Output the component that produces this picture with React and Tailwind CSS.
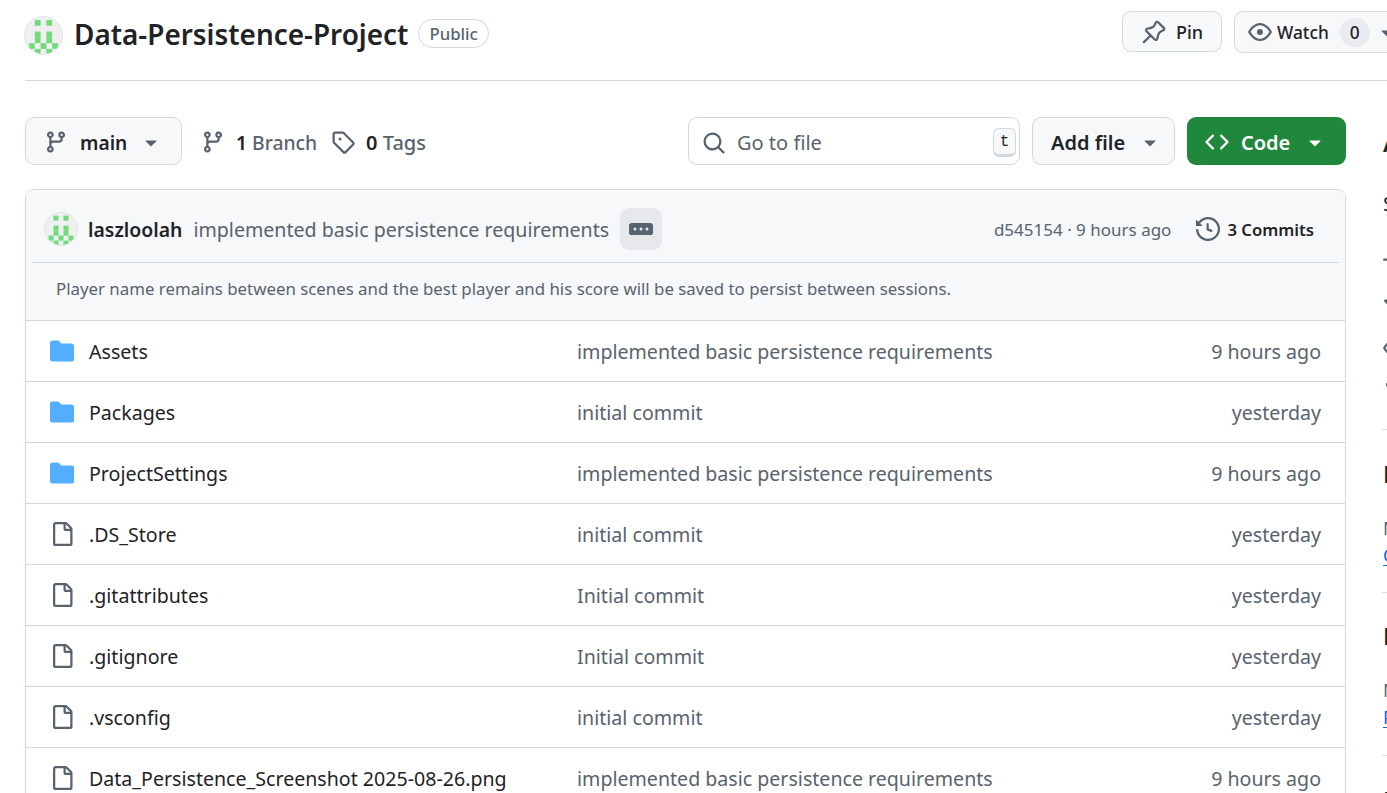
import React from 'react';

const ICONS = {
  branch: 'M9.5 3.25a2.25 2.25 0 1 1 3 2.122V6A2.5 2.5 0 0 1 10 8.5H6a1 1 0 0 0-1 1v1.128a2.251 2.251 0 1 1-1.5 0V5.372a2.25 2.25 0 1 1 1.5 0v1.836A2.493 2.493 0 0 1 6 7h4a1 1 0 0 0 1-1v-.628A2.25 2.25 0 0 1 9.5 3.25Zm-6 0a.75.75 0 1 0 1.5 0 .75.75 0 0 0-1.5 0Zm8.25-.75a.75.75 0 1 0 0 1.5.75.75 0 0 0 0-1.5ZM4.25 12a.75.75 0 1 0 0 1.5.75.75 0 0 0 0-1.5Z',
  tag: 'M1 7.775V2.75C1 1.784 1.784 1 2.75 1h5.025c.464 0 .91.184 1.238.513l6.25 6.25a1.75 1.75 0 0 1 0 2.474l-5.026 5.026a1.75 1.75 0 0 1-2.474 0l-6.25-6.25A1.752 1.752 0 0 1 1 7.775Zm1.5 0c0 .066.026.13.073.177l6.25 6.25a.25.25 0 0 0 .354 0l5.025-5.025a.25.25 0 0 0 0-.354l-6.25-6.25a.25.25 0 0 0-.177-.073H2.75a.25.25 0 0 0-.25.25ZM6 5a1 1 0 1 1 0 2 1 1 0 0 1 0-2Z',
  pin: 'm11.294.984 3.722 3.722a1.75 1.75 0 0 1-.504 2.826l-1.327.613a3.089 3.089 0 0 0-1.707 2.084l-.584 2.454c-.317 1.332-1.972 1.8-2.94.832L5.75 11.311 1.78 15.28a.749.749 0 1 1-1.06-1.06l3.969-3.97-2.204-2.204c-.968-.968-.5-2.623.832-2.94l2.454-.584a3.08 3.08 0 0 0 2.084-1.707l.613-1.327a1.75 1.75 0 0 1 2.826-.504ZM6.283 9.723l2.731 2.731a.25.25 0 0 0 .42-.119l.584-2.454a4.586 4.586 0 0 1 2.537-3.098l1.328-.613a.25.25 0 0 0 .072-.404l-3.722-3.722a.25.25 0 0 0-.404.072l-.613 1.328a4.584 4.584 0 0 1-3.098 2.537l-2.454.584a.25.25 0 0 0-.119.42l2.731 2.731Z',
  eye: 'M8 2c1.981 0 3.671.992 4.933 2.078 1.27 1.091 2.187 2.345 2.637 3.023a1.62 1.62 0 0 1 0 1.798c-.45.678-1.367 1.932-2.637 3.023C11.67 13.008 9.981 14 8 14c-1.981 0-3.671-.992-4.933-2.078C1.797 10.83.88 9.576.43 8.898a1.62 1.62 0 0 1 0-1.798c.45-.677 1.367-1.931 2.637-3.022C4.33 2.992 6.019 2 8 2ZM1.679 7.932a.12.12 0 0 0 0 .136c.411.622 1.241 1.75 2.366 2.717C5.176 11.758 6.527 12.5 8 12.5c1.473 0 2.825-.742 3.955-1.715 1.124-.967 1.954-2.096 2.366-2.717a.12.12 0 0 0 0-.136c-.412-.621-1.242-1.75-2.366-2.717C10.824 4.242 9.473 3.5 8 3.5c-1.473 0-2.825.742-3.955 1.715-1.124.967-1.954 2.096-2.366 2.717ZM8 10a2 2 0 1 1-.001-3.999A2 2 0 0 1 8 10Z',
  search: 'M10.68 11.74a6 6 0 0 1-7.922-8.982 6 6 0 0 1 8.982 7.922l3.04 3.04a.749.749 0 0 1-.326 1.275.749.749 0 0 1-.734-.215ZM11.5 7a4.499 4.499 0 1 0-8.997 0A4.499 4.499 0 0 0 11.5 7Z',
  code: 'm11.28 3.22 4.25 4.25a.75.75 0 0 1 0 1.06l-4.25 4.25a.749.749 0 0 1-1.275-.326.749.749 0 0 1 .215-.734L13.94 8l-3.72-3.72a.749.749 0 0 1 .326-1.275.749.749 0 0 1 .734.215Zm-6.56 0a.751.751 0 0 1 1.042.018.751.751 0 0 1 .018 1.042L2.06 8l3.72 3.72a.749.749 0 0 1-.326 1.275.749.749 0 0 1-.734-.215L.47 8.53a.75.75 0 0 1 0-1.06Z',
  history: 'm.427 1.927 1.215 1.215a8.002 8.002 0 1 1-1.6 5.685.75.75 0 1 1 1.493-.154 6.5 6.5 0 1 0 1.18-4.458l1.358 1.358A.25.25 0 0 1 3.896 6H.25A.25.25 0 0 1 0 5.75V2.104a.25.25 0 0 1 .427-.177ZM7.75 4a.75.75 0 0 1 .75.75v2.992l2.028.812a.75.75 0 0 1-.557 1.392l-2.5-1A.751.751 0 0 1 7 8.25v-3.5A.75.75 0 0 1 7.75 4Z',
  ellipsis: 'M0 5.75C0 4.784.784 4 1.75 4h12.5c.966 0 1.75.784 1.75 1.75v4.5A1.75 1.75 0 0 1 14.25 12H1.75A1.75 1.75 0 0 1 0 10.25ZM12 7a1 1 0 1 0 0 2 1 1 0 0 0 0-2ZM7 8a1 1 0 1 0 2 0 1 1 0 0 0-2 0ZM4 7a1 1 0 1 0 0 2 1 1 0 0 0 0-2Z',
  caret: 'm4.427 7.427 3.396 3.396a.25.25 0 0 0 .354 0l3.396-3.396A.25.25 0 0 0 11.396 7H4.604a.25.25 0 0 0-.177.427Z',
  file: 'M2 1.75C2 .784 2.784 0 3.75 0h6.586c.464 0 .909.184 1.237.513l2.914 2.914c.329.328.513.773.513 1.237v9.586A1.75 1.75 0 0 1 13.25 16h-9.5A1.75 1.75 0 0 1 2 14.25Zm1.75-.25a.25.25 0 0 0-.25.25v12.5c0 .138.112.25.25.25h9.5a.25.25 0 0 0 .25-.25V6h-2.75A1.75 1.75 0 0 1 9 4.25V1.5Zm6.75.062V4.25c0 .138.112.25.25.25h2.688l-.011-.013-2.914-2.914-.013-.011Z',
  folder: 'M1.75 1A1.75 1.75 0 0 0 0 2.75v10.5C0 14.216.784 15 1.75 15h12.5A1.75 1.75 0 0 0 16 13.25v-8.5A1.75 1.75 0 0 0 14.25 3H7.5a.25.25 0 0 1-.2-.1l-.9-1.2C6.07 1.26 5.55 1 5 1H1.75Z',
  pulse: 'M6 2c.306 0 .582.187.696.471L10 10.731l1.304-3.26A.751.751 0 0 1 12 7h3.25a.75.75 0 0 1 0 1.5h-2.742l-1.812 4.528a.751.751 0 0 1-1.392 0L6 4.77 4.696 8.03A.75.75 0 0 1 4 8.5H.75a.75.75 0 0 1 0-1.5h2.742l1.812-4.529A.751.751 0 0 1 6 2Z',
  star: 'M8 .25a.75.75 0 0 1 .673.418l1.882 3.815 4.21.612a.75.75 0 0 1 .416 1.279l-3.046 2.97.719 4.192a.751.751 0 0 1-1.088.791L8 12.347l-3.766 1.98a.75.75 0 0 1-1.088-.79l.72-4.194L.818 6.374a.75.75 0 0 1 .416-1.28l4.21-.611L7.327.668A.75.75 0 0 1 8 .25Zm0 2.445L6.615 5.5a.75.75 0 0 1-.564.41l-3.097.45 2.24 2.184a.75.75 0 0 1 .216.664l-.528 3.084 2.769-1.456a.75.75 0 0 1 .698 0l2.77 1.456-.53-3.084a.75.75 0 0 1 .216-.664l2.24-2.183-3.096-.45a.75.75 0 0 1-.564-.41L8 2.694Z',
  fork: 'M5 5.372v.878c0 .414.336.75.75.75h4.5a.75.75 0 0 0 .75-.75v-.878a2.25 2.25 0 1 1 1.5 0v.878a2.25 2.25 0 0 1-2.25 2.25h-1.5v2.128a2.251 2.251 0 1 1-1.5 0V8.5h-1.5A2.25 2.25 0 0 1 3.5 6.25v-.878a2.25 2.25 0 1 1 1.5 0ZM5 3.25a.75.75 0 1 0-1.5 0 .75.75 0 0 0 1.5 0Zm6.75.75a.75.75 0 1 0 0-1.5.75.75 0 0 0 0 1.5Zm-3 8.75a.75.75 0 1 0-1.5 0 .75.75 0 0 0 1.5 0Z',
};

function Icon({ name, className = 'w-6 h-6' }) {
  return (
    <svg viewBox="0 0 16 16" fill="currentColor" className={`shrink-0 ${className}`}>
      <path d={ICONS[name]} />
    </svg>
  );
}

// identicon, same pattern for both sizes
function Avatar({ className }) {
  const cells = [
    '.#.#.',
    '.....',
    '.#.#.',
    '.#.#.',
    '#.#.#',
    '.#.#.',
  ];
  return (
    <div className={`shrink-0 rounded-full border border-[#e1e3e6] bg-[#f0f0f0] overflow-hidden ${className}`}>
      <svg viewBox="-0.7 -0.52 6.4 6.4" className="w-full h-full">
        {cells.map((row, y) =>
          row.split('').map((c, x) => (c === '#' ? <rect key={`${x}-${y}`} x={x} y={y} width="1" height="1" fill="#6fdc7c" /> : null))
        )}
      </svg>
    </div>
  );
}

const files = [
  { name: 'Assets', dir: true, msg: 'implemented basic persistence requirements', when: '9 hours ago' },
  { name: 'Packages', dir: true, msg: 'initial commit', when: 'yesterday' },
  { name: 'ProjectSettings', dir: true, msg: 'implemented basic persistence requirements', when: '9 hours ago' },
  { name: '.DS_Store', msg: 'initial commit', when: 'yesterday' },
  { name: '.gitattributes', msg: 'Initial commit', when: 'yesterday' },
  { name: '.gitignore', msg: 'Initial commit', when: 'yesterday' },
  { name: '.vsconfig', msg: 'initial commit', when: 'yesterday' },
  { name: 'Data_Persistence_Screenshot 2025-08-26.png', msg: 'implemented basic persistence requirements', when: '9 hours ago' },
];

const btn = 'flex items-center border border-[#d1d9e0] bg-[#f6f8fa] rounded-[9px] text-[#1f2328]';

export default function App() {
  return (
    <div className="h-[793px] w-[1387px] overflow-hidden bg-white text-[#1f2328] text-[19.6px] font-['Noto_Sans',sans-serif]">
      {/* repo title bar */}
      <div className="ml-[25px] h-[81px] border-b border-[#d1d9e0] flex items-start justify-between">
        <div className="flex items-center pt-[15px]">
          <Avatar className="w-[39px] h-[39px] -ml-px" />
          <h1 className="ml-[11px] pb-[2px] text-[27.9px] font-semibold leading-[38px]">Data-Persistence-Project</h1>
          <span className="ml-[10px] mb-[3px] h-[29px] px-[10px] rounded-full border border-[#d1d9e0] text-[#59636e] text-[16.8px] font-medium flex items-center">Public</span>
        </div>
        <div className="flex pt-[11px] gap-[12px] shrink-0">
          <div className={`${btn} w-[100px] h-[41px] pl-[19px]`}>
            <Icon name="pin" className="w-6 h-6 text-[#59636e]" />
            <span className="ml-[10px] pt-[2px] text-[18px] font-medium">Pin</span>
          </div>
          <div className={`${btn} w-[170px] h-[42px] pl-[13px] rounded-r-none -mr-[17px]`}>
            <Icon name="eye" className="w-6 h-6 text-[#59636e]" />
            <span className="ml-[5px] pt-[2px] text-[17.3px] font-medium">Watch</span>
            <span className="ml-[11px] w-[30px] h-[29px] pt-px rounded-full bg-[#e9ebef] text-[17.3px] font-medium flex items-center justify-center">0</span>
            <Icon name="caret" className="w-6 h-6 ml-[5px] text-[#59636e]" />
          </div>
        </div>
      </div>

      <div className="flex pt-[36px] pl-[25px] gap-[37px]">
        <div className="w-[1321px] shrink-0">
          {/* toolbar */}
          <div className="flex items-center h-[48px]">
            <div className={`${btn} w-[157px] h-[48px] pl-[18px] pt-[2px]`}>
              <Icon name="branch" className="w-6 h-6 text-[#59636e]" />
              <span className="ml-[12px] pt-[2px] text-[19.2px] font-semibold">main</span>
              <Icon name="caret" className="w-6 h-6 ml-[12px] text-[#59636e]" />
            </div>
            <div className="flex items-center ml-[19px] pt-[2px] text-[#59636e] text-[19.3px]">
              <Icon name="branch" />
              <span className="ml-[11px] pt-[2px] font-medium"><span className="text-[#1f2328] font-semibold">1</span> Branch</span>
            </div>
            <div className="flex items-center ml-[14px] pt-[2px] text-[#59636e] text-[20px]">
              <Icon name="tag" />
              <span className="ml-[11px] pt-[2px] font-medium"><span className="text-[#1f2328] font-semibold">0</span> Tags</span>
            </div>
            <div className="ml-auto flex items-center gap-[12px]">
              <div className="w-[332px] h-[48px] rounded-[9px] border border-[#d1d9e0] bg-white flex items-center pl-[13px] pr-[3px] pt-[3px]">
                <Icon name="search" className="w-6 h-6 text-[#59636e]" />
                <span className="ml-[11px] text-[20px] text-[#59636e]">Go to file</span>
                <span className="ml-auto w-[23px] h-[29px] rounded-[6px] border border-[#d1d9e0] border-b-[3px] bg-[#f6f8fa] font-['Liberation_Mono',monospace] text-[16px] flex items-center justify-center">t</span>
              </div>
              <div className={`${btn} w-[143px] h-[48px] pl-[18px] pt-[2px]`}>
                <span className="pt-[2px] text-[20px] font-semibold">Add file</span>
                <Icon name="caret" className="w-6 h-6 ml-[13px] text-[#59636e]" />
              </div>
              <div className="w-[159px] h-[48px] rounded-[9px] bg-[#1f883d] text-white flex items-center pl-[18px] pt-[2px]">
                <Icon name="code" />
                <span className="ml-[12px] pt-[2px] text-[20px] font-semibold">Code</span>
                <Icon name="caret" className="w-6 h-6 ml-[13px]" />
              </div>
            </div>
          </div>

          {/* file list */}
          <div className="mt-[24px] border border-[#d1d9e0] rounded-[9px] overflow-hidden">
            <div className="bg-[#f6f8fa] border-b border-[#d1d9e0] h-[131px] px-[6px]">
              <div className="h-[73px] pt-[6px] border-b border-[#d1d9e0] flex items-center pl-[12px] pr-[25px]">
                <Avatar className="w-[34px] h-[34px]" />
                <span className="ml-[10px] pt-[2px] text-[19.4px] font-semibold">laszloolah</span>
                <span className="ml-[11px] pt-[2px] text-[#59636e]">implemented basic persistence requirements</span>
                <span className="ml-[11px] w-[42px] h-[42px] rounded-[9px] bg-[#e6e8ec] flex items-center justify-center">
                  <Icon name="ellipsis" className="w-6 h-6 text-[#59636e]" />
                </span>
                <span className="ml-auto pt-[2px] text-[#59636e] text-[17px]">d545154 · 9 hours ago</span>
                <Icon name="history" className="w-6 h-6 ml-[25px] text-[#59636e]" />
                <span className="ml-[7px] pt-[2px] text-[16.7px] font-semibold">3 Commits</span>
              </div>
              <div className="pl-[24px] pt-[13px] text-[16.84px] text-[#59636e]">Player name remains between scenes and the best player and his score will be saved to persist between sessions.</div>
            </div>
            {files.map((f, i) => (
              <div key={f.name} className={`flex items-center pl-[24px] pr-[24px] ${i > 0 ? 'h-[61px] border-t border-[#d1d9e0]' : 'h-[60px]'}`}>
                <Icon name={f.dir ? 'folder' : 'file'} className={`w-6 h-6 ${f.dir ? 'text-[#54aeff]' : 'text-[#59636e]'}`} />
                <span className="ml-[15px] pt-[2px] w-[488px] shrink-0 whitespace-nowrap">{f.name}</span>
                <span className="pt-[2px] text-[#59636e] whitespace-nowrap">{f.msg}</span>
                <span className="ml-auto pt-[2px] text-[#59636e] whitespace-nowrap">{f.when}</span>
              </div>
            ))}
          </div>
        </div>

        {/* sidebar, clipped by the window */}
        <div className="w-[300px] shrink-0 whitespace-nowrap">
          <h2 className="text-[24px] font-semibold leading-[52px]">About</h2>
          <p className="mt-[20px] text-[20px] leading-[30px]">Simple Unity project</p>
          <div className="mt-[29px] text-[#59636e] text-[18px]">
            <div className="h-[44px] flex"><Icon name="pulse" /><span className="ml-2">Activity</span></div>
            <div className="h-[44px] flex"><Icon name="star" /><span className="ml-2">0 stars</span></div>
            <div className="h-[44px] flex"><Icon name="eye" /><span className="ml-2">0 watching</span></div>
            <div className="h-[44px] flex"><Icon name="fork" /><span className="ml-2">0 forks</span></div>
          </div>
          <div className="mt-[5px] -ml-px h-px bg-[#d8dee4]" />
          <h2 className="mt-[28px] text-[24px] font-semibold leading-[32px]">Releases</h2>
          <p className="mt-[25px] text-[#59636e] text-[18px] leading-[26px]">No releases published</p>
          <p className="mt-px text-[#0969da] text-[18px] leading-[26px] underline underline-offset-[3px]">Create a new release</p>
          <div className="mt-[24px] -ml-px h-px bg-[#d8dee4]" />
          <h2 className="mt-[27px] text-[24px] font-semibold leading-[32px]">Packages</h2>
          <p className="mt-[25px] text-[#59636e] text-[18px] leading-[26px]">No packages published</p>
          <p className="mt-px text-[#0969da] text-[18px] leading-[26px] underline underline-offset-[3px]">Publish your first package</p>
          <div className="mt-[25px] -ml-px h-px bg-[#d8dee4]" />
          <h2 className="mt-[28px] text-[24px] font-semibold leading-[32px]">Languages</h2>
        </div>
      </div>
    </div>
  );
}
